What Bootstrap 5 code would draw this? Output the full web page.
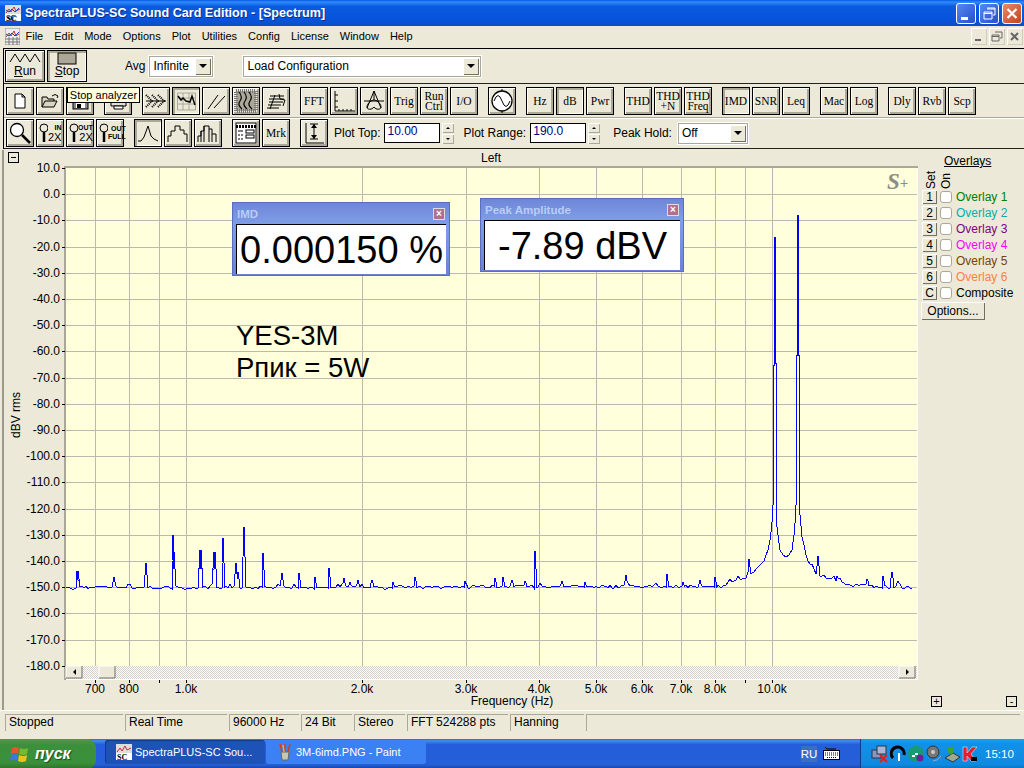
<!DOCTYPE html>
<html lang="en">
<head>
  <meta charset="UTF-8">
  <title>SpectraPLUS-SC Sound Card Edition - [Spectrum]</title>
  <link rel="stylesheet" href="https://cdn.jsdelivr.net/npm/bootstrap@5.3.3/dist/css/bootstrap.min.css">
  <style>
    html, body { width: 1024px; height: 768px; overflow: hidden; margin: 0; }
    body { background: #ece9d8; font: 11px "Liberation Sans", Arial, sans-serif; color: #000; }
    svg { display: block; flex: none; }

    .title-bar { height: 26px; padding: 0 2px 0 5px; background: linear-gradient(#0a5ae6 0, #2f8cfb 8%, #0a5be0 25%, #0854dc 70%, #0a4fc8 100%); color: #fff; font-size: 12.6px; font-weight: 700; text-shadow: 1px 1px 0 #0a2f90; }
    .cap-btn { width: 20px; height: 21px; margin-left: 3px; border: 1px solid #fff; border-radius: 3px; background: linear-gradient(135deg, #5a88ee, #2350d0); }
    .cap-btn.close { background: linear-gradient(135deg, #e88a6c, #c8401c); }
    .menu-bar { height: 20px; padding-left: 5px; }
    .menu-bar span { padding: 0 5.5px; font-size: 11px; }
    .mdi-group { gap: 2px; margin-right: 1px; }
    .mdi-btn { width: 16px; height: 17px; background: #ece9d8; box-shadow: inset 1px 1px 0 #fff, inset -1px -1px 0 #d0ccbc; }

    .tool-frame { margin: 2px 0 0 3px; border-top: 1px solid #000; border-left: 1px solid #000; }
    .tb-row { padding-left: 2px; }
    .gap-2px { gap: 2px; }
    .row-1 { height: 35px; border-bottom: 1px solid #222; padding-left: 1px; }
    .row-2 { height: 34px; border-bottom: 1px solid #aca899; box-shadow: 0 1px 0 #fff; }
    .row-3 { height: 31px; border-bottom: 1px solid #222; }
    .tb-btn { width: 28px; height: 28px; padding: 0; border: 1px solid #000; border-radius: 0; background: #ece9d8; box-shadow: inset 1px 1px 0 #fff, inset -2px -2px 0 #aca899; font: 11.5px/10px "Liberation Serif", serif; color: #000; }
    .tb-btn.pressed { box-shadow: inset 2px 2px 0 #aca899, inset -1px -1px 0 #fff; }
    .tb-btn.big { width: 40px; height: 32px; font: 12px/12px "Liberation Sans", sans-serif; }
    .stop-btn { margin-left: 2px; }
    .gap-l { margin-left: 8px; }
    .tb-label { font-size: 12px; color: #000; }
    .avg-label { margin-left: 38px; }
    .combo { height: 21px; background: #fff; border: 1px solid #aca899; box-shadow: 0 0 0 1px #fff; font-size: 12px; color: #000; padding-left: 3px; }
    .combo-arrow { width: 16px; height: 17px; margin: 1px; background: #ece9d8; box-shadow: inset 1px 1px 0 #fff, inset -1px -1px 0 #716f64; }
    .combo-arrow::after { content: ""; border: 4px solid transparent; border-top: 4px solid #000; border-bottom: 0; }
    .combo-avg { width: 64px; margin-left: 4px; }
    .combo-load { width: 238px; margin-left: 30px; }
    .combo-hold { width: 70px; margin-left: 4px; }
    .num-box { width: 56px; height: 20px; background: #fff; border: 1px solid #000; padding-left: 2px; font-size: 12px; color: #000080; margin-left: 2px; }
    .spin { width: 12px; height: 21px; margin-right: 7px; }
    .spin i { height: 10px; background: #ece9d8; box-shadow: inset 1px 1px 0 #fff, inset -1px -1px 0 #aca899; }
    .spin i::after { content: ""; border: 2px solid transparent; }
    .spin i.up::after { border-bottom: 2px solid #000; border-top: 0; }
    .spin i.dn::after { border-top: 2px solid #000; border-bottom: 0; }
    .z-btn { padding-left: 2px; font: 700 7px/8px "Liberation Sans", sans-serif; text-align: right; }
    .z-big { display: block; font-size: 11px; line-height: 11px; font-weight: 400; }
    .tip { position: absolute; left: 67px; top: 87px; width: 73px; height: 16px; background: #ffffe1; border: 1px solid #000; font-size: 11px; line-height: 14px; text-align: center; z-index: 5; }

    .main { height: 560px; margin-top: 1px; border-left: 2px solid #9c9a8c; margin-left: 2px; }
    .plot-wrap { width: 914px; height: 560px; position: relative; }
    .float-win { position: absolute; background: linear-gradient(#6f86d8, #7f9ee6 30%, #6c82d6); border: 1px solid #5a6cc4; padding: 0 3px 3px; }
    .win-title { height: 21px; padding: 0 1px; color: #b9cdf6; font-size: 11.5px; font-weight: 700; }
    .win-close { width: 12px; height: 12px; background: #b27090; border: 1px solid #ddd; color: #fff; font-size: 10px; line-height: 9px; text-align: center; font-weight: 700; }
    .win-body { background: #fff; border-top: 1px solid #000; border-left: 1px solid #000; text-align: center; font-size: 38px; line-height: 51px; height: 50px; color: #000; }
    .imd-win { left: 228px; top: 52px; width: 218px; height: 74px; }
    .peak-win { left: 476px; top: 48px; width: 204px; height: 74px; }

    .ov-panel { width: 106px; height: 560px; padding: 5px 2px 3px 3px; }
    .ov-head { font-size: 12px; text-decoration: underline; margin-left: 23px; height: 13px; line-height: 13px; }
    .ov-rot { writing-mode: vertical-rl; transform: rotate(180deg); font-size: 12px; line-height: 15px; height: 21px; }
    .ov-top { margin-left: 3px; height: 21px; }
    .ov-row { height: 16px; font-size: 12px; }
    .ov-set { width: 15px; height: 14px; padding: 0; border: 0; border-radius: 0; background: #ece9d8; box-shadow: inset 1px 1px 0 #fff, inset -1px -1px 0 #716f64; font: 12px/13px "Liberation Sans", sans-serif; margin: 0 3px 0 1px; color: #000; }
    .ov-check { width: 12px; height: 12px; margin: 0 4px 0 0; border-radius: 0; border: 1px solid #aca899; flex: none; }
    .opt-btn { width: 64px; height: 18px; margin-top: 1px; padding: 0; border: 0; border-radius: 0; background: #ece9d8; box-shadow: inset 1px 1px 0 #fff, inset -1px -1px 0 #716f64; font: 12px/14px "Liberation Sans", sans-serif; color: #000; }
    .mini-box { width: 11px; height: 11px; border: 1px solid #000; font-size: 11px; line-height: 8px; text-align: center; }
    .mini-row { padding: 0 5px 0 10px; margin-bottom: 0; }

    .status-bar { height: 29px; background: #ece9d8; border-top: 1px solid #fff; padding: 3px 4px 0 5px; gap: 2px; font-size: 12px; }
    .status-bar div { height: 17px; border-top: 1px solid #aca899; border-left: 1px solid #aca899; padding-left: 3px; line-height: 15px; }
    .task-bar { height: 30px; background: linear-gradient(#2a6ae4 0, #3f8cf3 6%, #245edb 18%, #2560d8 85%, #1941a5 100%); color: #fff; }
    .start-btn { width: 96px; height: 30px; border-radius: 0 9px 9px 0; background: linear-gradient(#4f9a4f, #3c8f3c 20%, #3a903a 80%, #2d6f2d); font: italic 700 16px "Liberation Sans", sans-serif; text-shadow: 1px 1px 1px #1a4a1a; padding-left: 10px; gap: 5px; }
    .task-btn { width: 160px; height: 24px; margin-top: 1px; padding-left: 11px; gap: 3px; border-radius: 3px; font-size: 11px; background: #3c81f3; }
    .task-btn.active { background: #1e52b7; box-shadow: inset 1px 1px 1px #153d8a; }
    .tasks { margin-left: 9px; gap: 1px; }
    .lang { width: 16px; height: 16px; background: #3a6fc0; font-size: 11.5px; margin-right: 6px; }
    .tray { width: 164px; height: 30px; margin-left: 20px; background: linear-gradient(#17a0f0 0, #1290e8 15%, #0f8ae0 85%, #0b6fc0 100%); border-left: 1px solid #0a3f8e; padding-left: 10px; gap: 1px; font-size: 11.5px; }
    .clock { margin-left: 6px; }
  </style>
</head>
<body>
  <!-- window caption -->
  <div class="title-bar d-flex align-items-center">
    <svg width="16" height="16" viewBox="0 0 16 16"><rect width="16" height="16" fill="#ddd"/><path d="M1 8l3-4 2 3 3-5 2 4 4-2" fill="none" stroke="#c03030"/><path d="M1 5l3 2 3-3 3 3 4-4" fill="none" stroke="#2040c0"/><rect y="9" width="16" height="7" fill="#fff"/><text x="1" y="15.5" font-size="8" font-weight="700" fill="#000" font-family="Liberation Serif">SC</text></svg>
    <span class="ms-1 flex-grow-1">SpectraPLUS-SC Sound Card Edition - [Spectrum]</span>
    <div class="cap-btn d-flex"><svg width="18" height="19"><rect x="4" y="13" width="7" height="3" fill="#fff"/></svg></div>
    <div class="cap-btn d-flex"><svg width="18" height="19"><path d="M7 4h8v7h-2M4 8h8v7H4zM4 9.500h8M7 5h8" fill="none" stroke="#fff"/></svg></div>
    <div class="cap-btn close d-flex"><svg width="18" height="19"><path d="M4.500 5l9 9M13.500 5l-9 9" stroke="#fff" stroke-width="2.200"/></svg></div>
  </div>

  <!-- menu -->
  <div class="menu-bar d-flex align-items-center">
    <svg width="15" height="17" viewBox="0 0 15 17"><rect width="15" height="17" fill="#eee" stroke="#888"/><path d="M1 9l3-4 2 3 3-5 2 5 3-2" fill="none" stroke="#c03030"/><path d="M1 6l3 2 3-3 3 3 4-4" fill="none" stroke="#2040c0"/><path d="M0 11h15M0 14h15M4 9v8M8 9v8M12 9v8" stroke="#777"/></svg>
    <span>File</span><span>Edit</span><span>Mode</span><span>Options</span><span>Plot</span><span>Utilities</span><span>Config</span><span>License</span><span>Window</span><span>Help</span>
    <div class="ms-auto d-flex mdi-group">
      <div class="mdi-btn"><svg width="16" height="17"><rect x="4" y="11" width="6" height="2" fill="#666"/></svg></div>
      <div class="mdi-btn"><svg width="16" height="17"><path d="M6 4h7v6h-2M3 7h7v6H3zM3 8.500h7" fill="none" stroke="#666"/></svg></div>
      <div class="mdi-btn"><svg width="16" height="17"><path d="M4 5l7 7M11 5l-7 7" stroke="#666" stroke-width="2"/></svg></div>
    </div>
  </div>

  <!-- toolbars -->
  <div class="tool-frame">
    <div class="tb-row row-1 d-flex align-items-center">
      <button class="btn tb-btn big d-flex flex-column align-items-center">
        <svg width="32" height="14" viewBox="0 0 32 14"><path d="M1 11l5-8 5 8 5-8 5 8 5-8 5 8" fill="none" stroke="#000"/></svg>
        <span><u>R</u>un</span>
      </button>
      <button class="btn tb-btn big pressed stop-btn d-flex flex-column align-items-center">
        <svg width="20" height="14" viewBox="0 0 20 14"><rect x="1" y="2" width="18" height="11" fill="#aca899" stroke="#000"/></svg>
        <span><u>S</u>top</span>
      </button>
      <span class="tb-label avg-label">Avg</span>
      <div class="combo combo-avg d-flex align-items-center justify-content-between"><span>Infinite</span><span class="combo-arrow d-flex align-items-center justify-content-center"></span></div>
      <div class="combo combo-load d-flex align-items-center justify-content-between"><span>Load Configuration</span><span class="combo-arrow d-flex align-items-center justify-content-center"></span></div>
    </div>

    <div class="tb-row row-2 d-flex align-items-center gap-2px" id="row2">
      <button class="btn tb-btn d-flex align-items-center justify-content-center"><svg width="22" height="22"><path d="M6 4h7l3 3v11H6zM13 4v3h3" fill="#fff" stroke="#000"/></svg></button>
      <button class="btn tb-btn d-flex align-items-center justify-content-center"><svg width="22" height="22"><path d="M3 17V7h5l1 2h6v2M3 17l3-6h12l-3 6z" fill="#d8d4c0" stroke="#000"/><path d="M13 6q3-3 6 0l-1 2" fill="none" stroke="#000"/></svg></button>
      <button class="btn tb-btn d-flex align-items-center justify-content-center"><svg width="22" height="22"><rect x="4" y="4" width="15" height="15" fill="#888" stroke="#000"/><rect x="7" y="13" width="9" height="5" fill="#fff"/><rect x="8" y="14" width="4" height="4" fill="#000"/></svg></button>
      <button class="btn tb-btn gap-l d-flex align-items-center justify-content-center"><svg width="22" height="22"><path d="M4 10h15v6H4z" fill="#ddd" stroke="#000"/><path d="M7 16h9v3H7z" fill="#fff" stroke="#000"/></svg></button>
      <button class="btn tb-btn gap-l d-flex align-items-center justify-content-center"><svg width="24" height="22"><path d="M2 11h20" stroke="#000"/><path d="M2 5l6 6-6 6M8 5l6 6-6 6M14 5l6 6-6 6" fill="none" stroke="#000" stroke-dasharray="1 1" stroke-width="2"/></svg></button>
      <button class="btn tb-btn pressed d-flex align-items-center justify-content-center"><svg width="22" height="22"><path d="M2.500 3v17h18V3zM2 8h19M2 14h19M8 3v17M14 3v17" fill="none" stroke="#aca899"/><path d="M3 6l3 4 2-2 3 3 4 1 2-6 3 9" fill="none" stroke="#000" stroke-width="1.500"/></svg></button>
      <button class="btn tb-btn d-flex align-items-center justify-content-center"><svg width="22" height="22"><path d="M3 19L13 5M9 18L20 6" fill="none" stroke="#000"/></svg></button>
      <button class="btn tb-btn d-flex align-items-center justify-content-center"><svg width="24" height="24"><rect x="2" y="2" width="20" height="20" fill="#aca899"/><rect x="2" y="2" width="20" height="20" fill="none" stroke="#777" stroke-dasharray="1 1" stroke-width="4"/><path d="M5 3q4 5 1 9t2 8M10 3q4 5 1 9t2 8M15 3q4 5 1 9t2 8" fill="none" stroke="#000" stroke-width="1.200"/></svg></button>
      <button class="btn tb-btn d-flex align-items-center justify-content-center"><svg width="24" height="22"><path d="M6 6h14M5 9h15M5 12h14M4 15h13M3 18h12" stroke="#000"/><path d="M6 19L11 5M15 4l1 5 5 1-2 6" fill="none" stroke="#000"/></svg></button>
      <button class="btn tb-btn gap-l">FFT</button>
      <button class="btn tb-btn d-flex align-items-center justify-content-center"><svg width="24" height="24"><path d="M3 2v20h20" fill="none" stroke="#000"/><path d="M3 6h3M3 12h3M3 18h3M7 22v-2M11 22v-2M15 22v-2M19 22v-2" stroke="#000"/></svg></button>
      <button class="btn tb-btn d-flex align-items-center justify-content-center"><svg width="24" height="24"><path d="M12 2v9M2 12h20M12 2L5 19M12 2l7 17" stroke="#000" fill="none"/><path d="M12 11c-2 0-7 3-7 7 0 3 5 3 7 0 2 3 7 3 7 0 0-4-5-7-7-7z" fill="none" stroke="#000"/></svg></button>
      <button class="btn tb-btn">Trig</button>
      <button class="btn tb-btn">Run<br>Ctrl</button>
      <button class="btn tb-btn">I/O</button>
      <button class="btn tb-btn gap-l d-flex align-items-center justify-content-center"><svg width="26" height="26"><circle cx="13" cy="13" r="10" fill="#fff" stroke="#000" stroke-width="1.300"/><path d="M5 13q4-11 8 0t8 0M13 1v2M13 23v2" fill="none" stroke="#000"/></svg></button>
      <button class="btn tb-btn gap-l">Hz</button>
      <button class="btn tb-btn pressed">dB</button>
      <button class="btn tb-btn">Pwr</button>
      <button class="btn tb-btn gap-l">THD</button>
      <button class="btn tb-btn">THD<br>+N</button>
      <button class="btn tb-btn">THD<br>Freq</button>
      <button class="btn tb-btn pressed gap-l">IMD</button>
      <button class="btn tb-btn">SNR</button>
      <button class="btn tb-btn">Leq</button>
      <button class="btn tb-btn gap-l">Mac</button>
      <button class="btn tb-btn">Log</button>
      <button class="btn tb-btn gap-l">Dly</button>
      <button class="btn tb-btn">Rvb</button>
      <button class="btn tb-btn">Scp</button>
    </div>

    <div class="tb-row row-3 d-flex align-items-center gap-2px">
      <button class="btn tb-btn d-flex align-items-center justify-content-center"><svg width="24" height="24"><circle cx="9" cy="9" r="6.500" fill="#fff" stroke="#000" stroke-width="1.300"/><path d="M14 14l8 8" stroke="#000" stroke-width="2.500"/></svg></button>
      <button class="btn tb-btn z-btn d-flex align-items-center"><svg width="9" height="24"><circle cx="5" cy="7" r="4" fill="none" stroke="#000"/><path d="M5 11v10" stroke="#000" stroke-width="2.500"/></svg><span>IN<span class="z-big">2X</span></span></button>
      <button class="btn tb-btn z-btn d-flex align-items-center"><svg width="9" height="24"><circle cx="5" cy="7" r="4" fill="none" stroke="#000"/><path d="M5 11v10" stroke="#000" stroke-width="2.500"/></svg><span>OUT<span class="z-big">2X</span></span></button>
      <button class="btn tb-btn z-btn d-flex align-items-center"><svg width="9" height="24"><circle cx="5" cy="7" r="4" fill="none" stroke="#000"/><path d="M5 11v10" stroke="#000" stroke-width="2.500"/></svg><span>OUT<br>FULL</span></button>
      <button class="btn tb-btn pressed gap-l d-flex align-items-center justify-content-center"><svg width="24" height="24"><path d="M2 20h3l3-4 4-11 3 10 3 3 4 2" fill="none" stroke="#000"/></svg></button>
      <button class="btn tb-btn d-flex align-items-center justify-content-center"><svg width="24" height="24"><path d="M2 21v-6h3v-5h4V5h5v4h4v4h3v8" fill="none" stroke="#000"/></svg></button>
      <button class="btn tb-btn d-flex align-items-center justify-content-center"><svg width="24" height="24"><path d="M2 21v-6h3v-5h3V5h5v3h3v5h4v8M5 21V10M8 21V5M13 21V8M16 21v-8" fill="none" stroke="#000"/></svg></button>
      <button class="btn tb-btn gap-l d-flex align-items-center justify-content-center"><svg width="24" height="24"><rect x="2" y="2" width="20" height="20" fill="#fff" stroke="#000"/><path d="M2 5.500h20" stroke="#000" stroke-width="3" stroke-dasharray="2 1"/><path d="M4 10h5M4 14h2M7 14h2M4 18h2M7 18h2" stroke="#000"/><rect x="12" y="9" width="8" height="3" fill="none" stroke="#000"/><rect x="12" y="14" width="8" height="3" fill="none" stroke="#000"/></svg></button>
      <button class="btn tb-btn">Mrk</button>
      <button class="btn tb-btn gap-l d-flex align-items-center justify-content-center"><svg width="24" height="24"><path d="M4 2v20h18M8 3h8M8 18h8M12 3v15" fill="none" stroke="#000"/><path d="M9 7l3-4 3 4zM9 14l3 4 3-4z" fill="#000"/></svg></button>
      <span class="tb-label ms-1">Plot Top:</span>
      <div class="num-box">10.00</div>
      <div class="spin d-flex flex-column justify-content-between"><i class="up d-flex align-items-center justify-content-center"></i><i class="dn d-flex align-items-center justify-content-center"></i></div>
      <span class="tb-label">Plot Range:</span>
      <div class="num-box">190.0</div>
      <div class="spin d-flex flex-column justify-content-between"><i class="up d-flex align-items-center justify-content-center"></i><i class="dn d-flex align-items-center justify-content-center"></i></div>
      <span class="tb-label ms-1">Peak Hold:</span>
      <div class="combo combo-hold d-flex align-items-center justify-content-between"><span>Off</span><span class="combo-arrow d-flex align-items-center justify-content-center"></span></div>
    </div>
  </div>
  <div class="tip">Stop analyzer</div>

  <!-- plot and overlays -->
  <div class="main d-flex">
    <div class="plot-wrap">
      <svg id="plot" width="914" height="560" viewBox="4 150 914 560" font-family="Liberation Sans" font-size="12"></svg>
      <div class="float-win imd-win">
        <div class="win-title d-flex align-items-center justify-content-between"><span>IMD</span><span class="win-close">×</span></div>
        <div class="win-body">0.000150 %</div>
      </div>
      <div class="float-win peak-win">
        <div class="win-title d-flex align-items-center justify-content-between"><span>Peak Amplitude</span><span class="win-close">×</span></div>
        <div class="win-body">-7.89 dBV</div>
      </div>
    </div>
    <div class="ov-panel d-flex flex-column">
      <div class="ov-head">Overlays</div>
      <div class="ov-top d-flex"><span class="ov-rot">Set</span><span class="ov-rot">On</span></div>
      <div id="overlays"></div>
      <button class="btn opt-btn">Options...</button>
      <div class="mini-row d-flex justify-content-between mt-auto"><div class="mini-box">+</div><div class="mini-box">-</div></div>
    </div>
  </div>

  <!-- status -->
  <div class="status-bar d-flex">
    <div style="width:118px">Stopped</div>
    <div style="width:102px">Real Time</div>
    <div style="width:70px">96000 Hz</div>
    <div style="width:51px">24 Bit</div>
    <div style="width:51px">Stereo</div>
    <div style="width:101px">FFT 524288 pts</div>
    <div style="width:74px">Hanning</div>
    <div class="flex-grow-1"></div>
  </div>

  <!-- taskbar -->
  <div class="task-bar d-flex">
    <div class="start-btn d-flex align-items-center">
      <svg width="20" height="20" viewBox="0 0 20 20"><path d="M2 4q4-2 7 0l-1 6q-3-2-7 0z" fill="#e8542c"/><path d="M10 4q4 2 8 0l-1 6q-4 2-8 0z" fill="#7ab830"/><path d="M1 11q4-2 7 0l-1 6q-3-2-7 0z" fill="#3a78e0"/><path d="M9 11q4 2 8 0l-1 6q-4 2-8 0z" fill="#f0c020"/></svg>
      <span>пуск</span>
    </div>
    <div class="tasks d-flex">
      <div class="task-btn active d-flex align-items-center">
        <svg width="16" height="16" viewBox="0 0 16 16"><rect width="16" height="16" fill="#ddd"/><path d="M1 8l3-4 2 3 3-5 2 4 4-2" fill="none" stroke="#c03030"/><rect y="9" width="16" height="7" fill="#fff"/><text x="1" y="15.500" font-size="8" font-weight="700" fill="#000" font-family="Liberation Serif">SC</text></svg>
        <span>SpectraPLUS-SC Sou...</span>
      </div>
      <div class="task-btn d-flex align-items-center">
        <svg width="16" height="18" viewBox="0 0 16 18"><path d="M4 9h8l-1 8H5z" fill="#c8c8b0" stroke="#666"/><path d="M5 9L3 1M8 9V1M11 9l2-8" stroke="#d04020" stroke-width="1.500"/><path d="M7 9l-1-7" stroke="#e8b020" stroke-width="1.500"/></svg>
        <span>3M-6imd.PNG - Paint</span>
      </div>
    </div>
    <div class="ms-auto d-flex align-items-center">
      <div class="lang d-flex align-items-center justify-content-center">RU</div>
      <svg width="17" height="14" viewBox="0 0 17 14"><path d="M2 0l2 2h9" fill="none" stroke="#000"/><rect x="0.500" y="3.500" width="16" height="9" fill="#fff" stroke="#000"/><path d="M2 6h13M2 8h13M4 10.500h9" stroke="#000" stroke-dasharray="1 1"/></svg>
    </div>
    <div class="tray d-flex align-items-center">
      <svg width="18" height="18" viewBox="0 0 18 18"><rect x="1" y="5" width="9" height="8" fill="#8896c0" stroke="#334"/><rect x="6" y="1" width="9" height="8" fill="#aab4d8" stroke="#334"/><path d="M9 10l7 7M16 10l-7 7" stroke="#e02020" stroke-width="2"/></svg>
      <svg width="17" height="18" viewBox="0 0 17 18"><path d="M3 13a6.500 6.500 0 1 1 11 -3" fill="none" stroke="#000" stroke-width="3"/><path d="M9 8v8" stroke="#fff" stroke-width="2"/></svg>
      <svg width="17" height="18" viewBox="0 0 17 18"><circle cx="8" cy="9" r="8" fill="#1a9a70"/><path d="M4 11h3M7 9h3" stroke="#fff" stroke-width="2"/><circle cx="12" cy="13" r="3.500" fill="#702090"/></svg>
      <svg width="17" height="18" viewBox="0 0 17 18"><ellipse cx="7" cy="7" rx="6" ry="6" fill="#777" stroke="#333"/><circle cx="7" cy="7" r="2" fill="#ccc"/><path d="M7 16q5 0 8-5" fill="none" stroke="#99a8d0"/></svg>
      <svg width="17" height="18" viewBox="0 0 17 18"><path d="M1 13l8-5 7 4-7 5z" fill="#a0a890" stroke="#333"/><path d="M4 2h5v4h2l-4 4-4-4h1z" fill="#40a030"/></svg>
      <svg width="16" height="18" viewBox="0 0 16 18"><path d="M1 2h4v6l5-6h5l-6 7 5 7H9L5 11v5H1z" fill="#e02030" stroke="#fff" stroke-width=".5"/><rect x="9" y="12" width="6" height="4" fill="#000"/></svg>
      <span class="clock">15:10</span>
    </div>
  </div>

  <script src="https://cdn.jsdelivr.net/npm/bootstrap@5.3.3/dist/js/bootstrap.bundle.min.js"></script>
  <script>
    // Overlay rows
    const overlays = [['1','Overlay 1','#008000'],['2','Overlay 2','#00b0b0'],['3','Overlay 3','#800080'],['4','Overlay 4','#ff00ff'],['5','Overlay 5','#804000'],['6','Overlay 6','#ff8040'],['C','Composite','#000']];
    document.getElementById('overlays').innerHTML = overlays.map(o =>
      `<div class="ov-row d-flex align-items-center"><button class="btn ov-set">${o[0]}</button><input type="checkbox" class="form-check-input ov-check"><span style="color:${o[2]}">${o[1]}</span></div>`).join('');

    // Plot drawing, in page coordinates
    const X0 = 66, X1 = 915, YT = 168, DY = 26.2;
    let s = '';
    s += `<defs><pattern id="hatch" width="2" height="2" patternUnits="userSpaceOnUse"><rect width="2" height="2" fill="#fff"/><rect width="1" height="1" fill="#d4d0c8"/><rect x="1" y="1" width="1" height="1" fill="#d4d0c8"/></pattern></defs>`;
    s += `<rect x="64" y="166" width="854" height="514" fill="#fff"/><path d="M65 680V167H918" fill="none" stroke="#aca899" stroke-width="2"/>`;
    s += `<rect x="${X0}" y="168" width="851" height="498" fill="#ffffdc"/>`;
    // horizontal grid and dB labels
    for (let i = 0; i <= 19; i++) {
      const y = Math.round(YT + i * DY);
      const v = 10 - i * 10;
      if (i > 0) s += `<path d="M${X0} ${y + .5}H917" stroke="#bcb9b0" stroke-width="1"/>`;
      s += `<path d="M62 ${y + .5}H65" stroke="#000"/>`;
      s += `<text x="60" y="${y + 4}" text-anchor="end">${v.toFixed(1)}</text>`;
    }
    // log frequency grid
    const freq = [[700,'700'],[800,'800'],[900,''],[1000,'1.0k'],[2000,'2.0k'],[3000,'3.0k'],[4000,'4.0k'],[5000,'5.0k'],[6000,'6.0k'],[7000,'7.0k'],[8000,'8.0k'],[9000,''],[10000,'10.0k']];
    freq.forEach(f => {
      const x = Math.round(186 + 586 * Math.log10(f[0] / 1000));
      s += `<path d="M${x + .5} 168V666" stroke="#bcb9b0" stroke-width="1"/><path d="M${x + .5} 680V683" stroke="#000"/>`;
      if (f[1]) s += `<text x="${x}" y="693" text-anchor="middle">${f[1]}</text>`;
    });
    // trace
    const env = [[66,587],[720,586],[733,581],[747,576],[755,570],[763,562],[768,550]];
    const spikes = {77:571,78:571,114:577,146:563,173:535,174:552,200:550,201:550,214:552,215:552,223:538,236:563,238:572,244:527,263:553,282:573,299:573,315:577,329:568,344:578,350:582,358:580,372:580,393:582,415:577,465:581,495:578,503:577,512:580,525:581,535:551,562:581,585:582,626:575,667:574,683:582,700:580,715:577,749:559};
    const right = [[802,537],[807,558],[815,572],[818,574],[821,575],[837,580],[850,584],[880,586],[914,587]];
    const rightSpikes = {818:556,837:576,867:579,883:576,892:572,898:581};
    let seed = 17;
    const rnd = () => (seed = (seed * 1103 + 12345) % 65536) / 65536;
    const noise = () => { const r = rnd(); return r > .95 ? -3 : Math.round(r * 3) - 1; };
    const lerp = (tbl, x) => {
      for (let i = 1; i < tbl.length; i++) if (x <= tbl[i][0]) {
        const a = tbl[i - 1], b = tbl[i];
        return a[1] + (b[1] - a[1]) * (x - a[0]) / (b[0] - a[0]);
      }
      return tbl[tbl.length - 1][1];
    };
    let pts = [];
    const walk = (from, to, tbl, sp) => {
      for (let x = from; x < to; x++) {
        const base = lerp(tbl, x) + noise();
        if (sp[x] !== undefined) {
          const mid = Math.round(sp[x] + (base - sp[x]) * .5);
          pts.push([x - 1, mid], [x, sp[x]], [x + 1, mid]);
        } else if (x % 2 === 0) {
          pts.push([x, Math.round(base)]);
        }
      }
    };
    walk(66, 768, env, spikes);
    pts.push([768,550],[770,540],[771,532],[772,522],[773,505],[773,365],[774,365],[774,237],[775,237],[775,363],[776,363],[776,505],[777,527],[778,535],[780,550],[783,555],[786,557],[789,555],[792,550],[794,535],[795,523],[796,505],[796,355],[797,355],[797,215],[798,215],[798,355],[799,355],[799,505],[800,515],[802,537]);
    walk(803, 914, right, rightSpikes);
    s += `<polyline points="${pts.map(p => p.join(',')).join(' ')}" fill="none" stroke="#0000ff" stroke-width="1" shape-rendering="crispEdges"/>`;
    // scrollbar
    s += `<rect x="66" y="666" width="851" height="13" fill="url(#hatch)"/>`;
    const sbBtn = (x, w) => `<rect x="${x}" y="666" width="${w}" height="12" fill="#ece9d8"/><path d="M${x} 678V666H${x + w}" fill="none" stroke="#fff"/><path d="M${x} 678H${x + w}V666" fill="none" stroke="#716f64"/>`;
    s += sbBtn(66, 16) + `<path d="M76 669v6l-3-3z" fill="#000"/>`;
    s += sbBtn(99, 16);
    s += sbBtn(899, 16) + `<path d="M906 669v6l3-3z" fill="#000"/>`;
    // labels
    s += `<text x="491" y="162" text-anchor="middle">Left</text>`;
    s += `<text x="512" y="705" text-anchor="middle">Frequency (Hz)</text>`;
    s += `<text transform="translate(20 415) rotate(-90)" text-anchor="middle">dBV rms</text>`;
    s += `<rect x="8.500" y="152.500" width="10" height="10" fill="none" stroke="#000"/><path d="M11 157.500h5" stroke="#000"/>`;
    s += `<text x="887" y="189" font-family="Liberation Serif" font-weight="700" font-style="italic" font-size="23" fill="#8c8c84">S</text><text x="900" y="188" font-size="14" fill="#8c8c84">+</text>`;
    s += `<text x="236" y="345" font-size="27.500">YES-3M</text><text x="236" y="377" font-size="27.500">Рпик = 5W</text>`;
    document.getElementById('plot').innerHTML = s;
  </script>
</body>
</html>
